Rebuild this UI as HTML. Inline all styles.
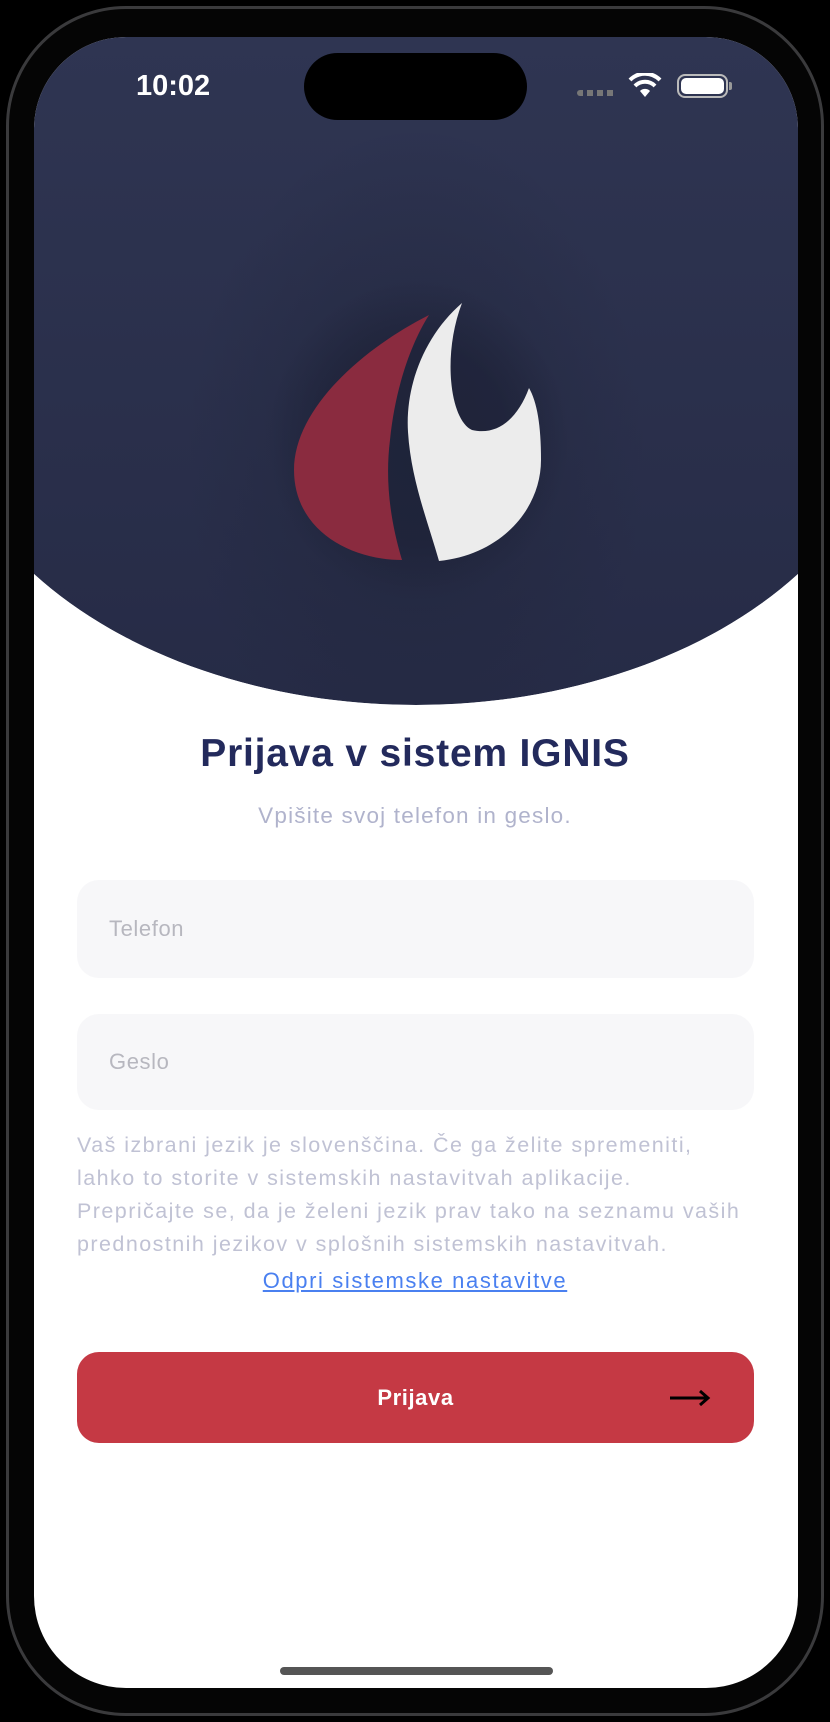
<!DOCTYPE html>
<html><head><meta charset="utf-8"><style>
*{margin:0;padding:0;box-sizing:border-box}
html,body{width:830px;height:1722px;background:#000;overflow:hidden;font-family:"Liberation Sans",sans-serif}
.frame{position:absolute;left:6px;top:6px;width:818px;height:1710px;border-radius:120px;border:3px solid #3a3a3c;background:#050505}
.screen{position:absolute;left:34px;top:37px;width:764px;height:1651px;border-radius:92px;background:#fff;overflow:hidden}
.abs{position:absolute}
.field{position:absolute;left:77px;width:677px;background:#f7f7f9;border-radius:22px;color:#b7b7bf;font-size:22px;padding-left:32px;letter-spacing:.6px}
.p{position:absolute;left:77px;width:720px;color:#c0c2d4;font-size:21.5px;line-height:33px;letter-spacing:1.45px;white-space:nowrap}
</style></head><body>
<div class="frame"></div>
<div class="screen">
<svg width="764" height="700" style="position:absolute;left:0;top:0">
<defs><linearGradient id="g" x1="0" y1="0" x2="0" y2="1"><stop offset="0" stop-color="#2f3552"/><stop offset="1" stop-color="#262b46"/></linearGradient>
<radialGradient id="fig" cx="0.5" cy="0.5" r="0.5"><stop offset="0" stop-color="#1f2439" stop-opacity=".6"/><stop offset="1" stop-color="#1f2439" stop-opacity="0"/></radialGradient>
<radialGradient id="sh" cx="0.5" cy="0.5" r="0.5"><stop offset="0.6" stop-color="#1a1e32" stop-opacity=".5"/><stop offset="1" stop-color="#1a1e32" stop-opacity="0"/></radialGradient>
<clipPath id="c"><path d="M0,0 H764 V537 A480 332 0 0 1 0 537 Z"/></clipPath></defs>
<g clip-path="url(#c)">
<path d="M0,0 H764 V537 A480 332 0 0 1 0 537 Z" fill="url(#g)"/>
<ellipse cx="382" cy="420" rx="230" ry="330" fill="url(#fig)"/>
<g transform="translate(-34,-37)">
<ellipse cx="418" cy="440" rx="150" ry="160" fill="url(#sh)"/>
<path d="M429,315 C360,350 294,410 294,470 C294,530 350,560 402,560 C390,520 385,480 390,440 C395,390 410,345 429,315 Z" fill="#8a2b3f"/>
<path d="M462,303 C425,335 405,385 408,432 C411,480 428,522 439,561 C500,555 541,510 541,460 C541,425 537,402 529,388 C518,418 498,436 472,430 C450,420 442,355 462,303 Z" fill="#ececec"/>
</g>
</g>
</svg>
</div>
<div class="abs" style="left:304px;top:53px;width:223px;height:67px;border-radius:34px;background:#000"></div>
<div class="abs" style="left:136px;top:70px;color:#fff;font-size:29px;font-weight:bold">10:02</div>
<div class="abs" style="left:577px;top:90px;width:40px;height:6px;background:repeating-linear-gradient(90deg,#777 0 6px,transparent 6px 10px);border-radius:3px"></div>
<svg class="abs" style="left:628px;top:73px" width="34" height="26" viewBox="0 0 34 26"><path d="M17 24 L12 18 A7 7 0 0 1 22 18 Z" fill="#fff"/><path d="M7 13 A14 14 0 0 1 27 13" stroke="#fff" stroke-width="4" fill="none"/><path d="M2 7 A21 21 0 0 1 32 7" stroke="#fff" stroke-width="4" fill="none"/></svg>
<div class="abs" style="left:677px;top:74px;width:51px;height:24px;border:2px solid #bbb;border-radius:8px;padding:2px"><div style="width:100%;height:100%;background:#fff;border-radius:5px"></div></div>
<div class="abs" style="left:729px;top:82px;width:3px;height:8px;background:#999;border-radius:0 2px 2px 0"></div>
<div class="abs" style="left:0;width:830px;top:732px;text-align:center;color:#232a5c;font-size:39px;font-weight:bold;letter-spacing:.8px">Prijava v sistem IGNIS</div>
<div class="abs" style="left:0;width:830px;top:803px;text-align:center;color:#b0b3cc;font-size:22.5px;letter-spacing:1.2px">Vpišite svoj telefon in geslo.</div>
<div class="field" style="top:880px;height:98px;line-height:98px">Telefon</div>
<div class="field" style="top:1014px;height:96px;line-height:96px">Geslo</div>
<div class="p" style="top:1129px">Vaš izbrani jezik je slovenščina. Če ga želite spremeniti,<br>lahko to storite v sistemskih nastavitvah aplikacije.<br>Prepričajte se, da je želeni jezik prav tako na seznamu vaših<br>prednostnih jezikov v splošnih sistemskih nastavitvah.</div>
<div class="abs" style="left:0;width:830px;top:1268px;text-align:center;color:#4a80f0;font-size:22px;text-decoration:underline;letter-spacing:1.6px">Odpri sistemske nastavitve</div>
<div class="abs" style="left:77px;top:1352px;width:677px;height:91px;background:#c53944;border-radius:22px;color:#fff;font-size:22px;font-weight:bold;text-align:center;line-height:91px;letter-spacing:.6px">Prijava</div>
<svg class="abs" style="left:668px;top:1388px" width="44" height="20"><path d="M2 10 H40 M32 3 L40 10 L32 17" stroke="#000" stroke-width="3" fill="none"/></svg>
<div class="abs" style="left:280px;top:1667px;width:273px;height:8px;border-radius:4px;background:#555"></div>
</body></html>
